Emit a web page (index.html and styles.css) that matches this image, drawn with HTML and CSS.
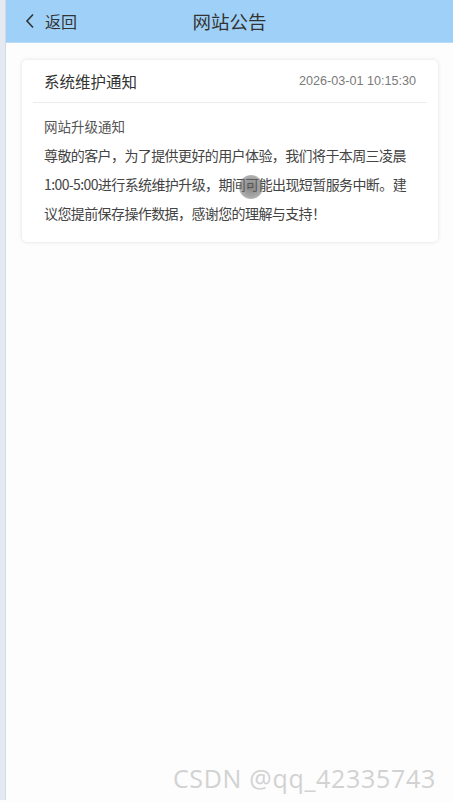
FILE: index.html
```html
<!DOCTYPE html>
<html lang="zh">
<head>
<meta charset="utf-8">
<title>网站公告</title>
<link rel="stylesheet" href="styles.css">
</head>
<body>
<div class="frame">
  <div class="rail"></div>
  <div class="app">
    <header class="topbar">
      <a class="back">
        <svg class="chev" width="10" height="16" viewBox="0 0 10 16"><path d="M8 1.5 L2 8 L8 14.5" fill="none" stroke="#333" stroke-width="1.6"/></svg>
        <span>返回</span>
      </a>
      <h1 class="title">网站公告</h1>
    </header>
    <main class="content">
      <section class="card">
        <div class="card-head">
          <span class="card-title">系统维护通知</span>
          <span class="card-date">2026-03-01 10:15:30</span>
        </div>
        <div class="card-body">
          <p class="sub">网站升级通知</p>
          <p class="text">尊敬的客户，为了提供更好的用户体验，我们将于本周三凌晨1:00-5:00进行系统维护升级，期间可能出现短暂服务中断。建议您提前保存操作数据，感谢您的理解与支持！</p>
          <span class="touch"></span>
        </div>
      </section>
    </main>
    <div class="watermark">CSDN @qq_42335743</div>
  </div>
</div>
</body>
</html>
```
FILE: styles.css
```css
* { box-sizing: border-box; }
html, body { margin: 0; padding: 0; }
body {
  width: 453px;
  height: 802px;
  overflow: hidden;
  background: #fdfdfd;
  font-family: "Noto Sans CJK SC", sans-serif;
}
.frame {
  display: flex;
  height: 802px;
}
.rail {
  width: 6px;
  height: 800px;
  background: #e5e9f1;
  border-right: 1px solid #d3d9e4;
  flex: none;
}
.app {
  flex: 1;
  display: flex;
  flex-direction: column;
  position: relative;
}
.topbar {
  height: 43px;
  background: #9fd1f8;
  border-bottom: 1px solid #b9dbf5;
  display: flex;
  align-items: center;
  position: relative;
}
.back {
  display: flex;
  align-items: center;
  margin-left: 19px;
  gap: 10px;
  font-size: 16px;
  color: #333;
}
.chev { display: block; }
.title {
  position: absolute;
  left: 0;
  right: 0;
  text-align: center;
  margin: 0;
  font-weight: normal;
  font-size: 18.5px;
  color: #333;
  pointer-events: none;
}
.content {
  padding: 17px 15px 0 16px;
}
.card {
  background: #fff;
  border-radius: 5px;
  box-shadow: 0 0 4px rgba(0,0,0,0.12);
  padding: 0 11px 14px 11px;
}
.card-head {
  display: flex;
  justify-content: space-between;
  align-items: center;
  height: 43px;
  padding: 0 11px 0 11px;
  border-bottom: 1px solid #ececec;
}
.card-title {
  font-size: 15.5px;
  color: #333;
}
.card-date {
  font-family: "Liberation Sans", Arial, sans-serif;
  font-size: 12.6px;
  color: #7a7a7a;
}
.card-body {
  padding: 9px 14px 0 11px;
  position: relative;
}
.sub {
  margin: 0;
  font-size: 13.5px;
  line-height: 29px;
  color: #555;
}
.text {
  margin: 0;
  font-size: 14px;
  letter-spacing: -0.6px;
  line-height: 29px;
  color: #444;
}
.touch {
  position: absolute;
  left: 206px;
  top: 72px;
  width: 24px;
  height: 24px;
  border-radius: 50%;
  background: radial-gradient(circle, rgba(90,90,90,0.75) 0, rgba(110,110,110,0.6) 60%, rgba(150,150,150,0.2) 100%);
}
.watermark {
  position: absolute;
  right: 17px;
  bottom: 7px;
  font-family: "Open Sans", "DejaVu Sans", sans-serif;
  font-size: 25px;
  letter-spacing: 0.7px;
  color: #d2d2d2;
}
```
